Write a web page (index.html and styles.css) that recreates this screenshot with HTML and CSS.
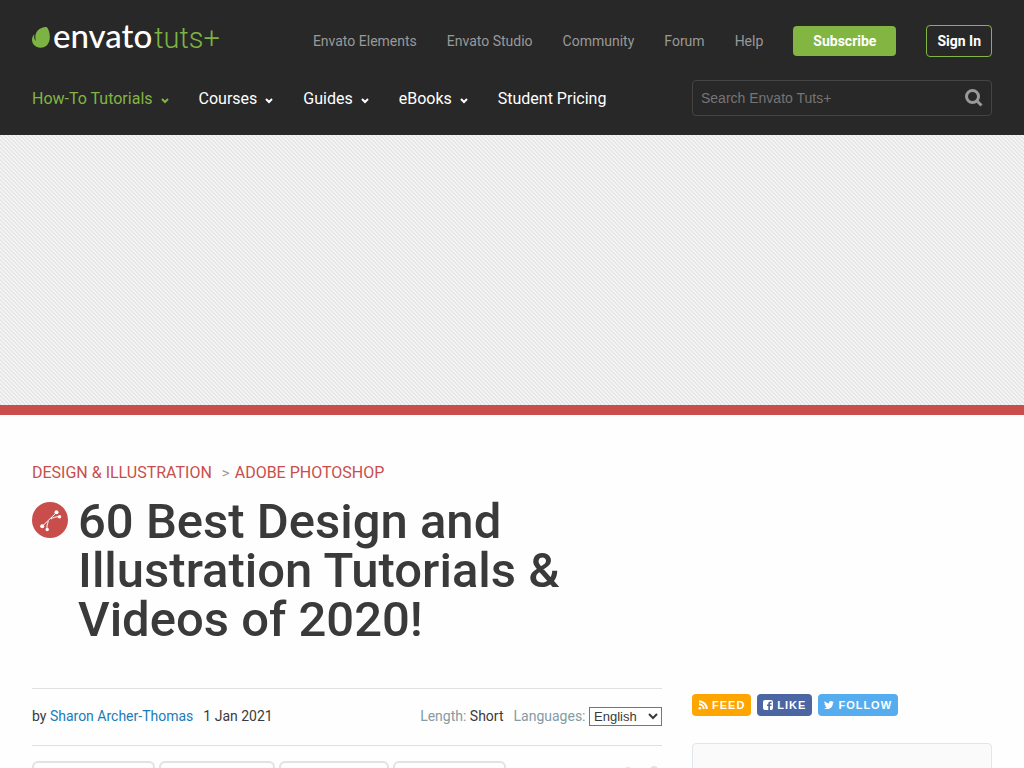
FILE: index.html
```html
<!DOCTYPE html>
<html lang="en">
<head>
<meta charset="utf-8">
<meta name="viewport" content="width=device-width, initial-scale=1">
<title>60 Best Design and Illustration Tutorials &amp; Videos of 2020!</title>
<link rel="stylesheet" href="styles.css">
</head>
<body>
<header class="header">
  <div class="header-top">
    <a class="logo" href="#" aria-label="Envato Tuts+">
      <svg class="logo-leaf" viewBox="0 0 18 21" aria-hidden="true"><path d="M14.8.3C13.600-.5 8.500.5 5.500 3.800 3 6.600 3.100 10.400 3.700 13.200c.1.500-.3.500-.5.200C2.200 12 2 9.800 2.300 8c0-.4-.3-.5-.5-.2C.6 9.300 0 11 0 12.800 0 17.200 3.500 20.700 8.400 20.700c4.800 0 8.300-3 9.200-8C18.600 7 16.300 1.300 14.800.3z"/></svg>
      <span class="logo-envato">envato</span><span class="logo-tuts">tuts+</span>
    </a>
    <nav class="meta-nav" aria-label="Envato">
      <a href="#">Envato Elements</a>
      <a href="#">Envato Studio</a>
      <a href="#">Community</a>
      <a href="#">Forum</a>
      <a href="#">Help</a>
      <a class="subscribe" href="#">Subscribe</a>
      <a class="sign-in" href="#">Sign In</a>
    </nav>
  </div>
  <div class="header-main">
    <nav class="main-nav" aria-label="Main">
      <a class="active" href="#">How-To Tutorials<svg class="caret" viewBox="0 0 8 6" aria-hidden="true"><path d="M1 1l3 3 3-3"/></svg></a>
      <a href="#">Courses<svg class="caret" viewBox="0 0 8 6" aria-hidden="true"><path d="M1 1l3 3 3-3"/></svg></a>
      <a href="#">Guides<svg class="caret" viewBox="0 0 8 6" aria-hidden="true"><path d="M1 1l3 3 3-3"/></svg></a>
      <a href="#">eBooks<svg class="caret" viewBox="0 0 8 6" aria-hidden="true"><path d="M1 1l3 3 3-3"/></svg></a>
      <a href="#">Student Pricing</a>
    </nav>
    <form class="search">
      <input type="search" aria-label="Search Envato Tuts+" placeholder="Search Envato Tuts+">
      <button type="submit" aria-label="Search"><svg viewBox="0 0 18 18" aria-hidden="true"><circle cx="7.500" cy="7.500" r="6"/><path d="M12 12l4.500 4.500"/></svg></button>
    </form>
  </div>
</header>
<div class="banner"></div>
<main class="page">
  <div class="content">
    <nav class="breadcrumb" aria-label="Breadcrumb"><a href="#">Design &amp; Illustration</a><span>&gt;</span><a href="#">Adobe Photoshop</a></nav>
    <div class="title">
      <svg class="topic" viewBox="0 0 36 36" aria-hidden="true"><circle class="disc" cx="18" cy="18" r="18"/><path class="curve" d="M10.500 24L24.500 10.500"/><path class="arm" d="M15.200 27.500c-.6-3 0-6 1.300-8M19 17c2-1.600 5-2.300 8.500-2.300"/><g class="nodes"><circle cx="10.200" cy="24.300" r="2"/><circle cx="24.500" cy="10.300" r="2"/><circle cx="15.200" cy="27.500" r="1.700"/><circle cx="27.500" cy="14.700" r="1.700"/></g></svg>
      <h1>60 Best Design and Illustration Tutorials &amp; Videos of 2020!</h1>
    </div>
  </div>
  <div class="columns">
    <div class="post">
      <div class="byline">
        <span>by <a href="#">Sharon Archer-Thomas</a></span>
        <time datetime="2021-01-01">1 Jan 2021</time>
        <span class="length"><span class="label">Length:</span> Short</span>
        <span class="languages"><label class="label" for="lang">Languages:</label> <select id="lang"><option>English</option></select></span>
      </div>
      <div class="tags">
        <div class="tag tag-a"></div><div class="tag tag-b"></div><div class="tag tag-c"></div><div class="tag tag-d"></div>
        <svg class="share" viewBox="0 0 40 24" aria-hidden="true"><circle cx="6" cy="8" r="6"/><circle cx="32" cy="5" r="4"/></svg>
      </div>
    </div>
    <aside class="sidebar">
      <div class="social">
        <a class="feed" href="#"><svg viewBox="0 0 10 10" aria-hidden="true"><circle class="fill" cx="1.800" cy="8.200" r="1.300"/><path class="line" d="M1 4.300A4.700 4.700 0 0 1 5.700 9M1 1.200A7.800 7.800 0 0 1 8.800 9"/></svg>Feed</a>
        <a class="like" href="#"><svg viewBox="0 0 10 10" aria-hidden="true"><path class="fill" d="M2 0h6a2 2 0 0 1 2 2v6a2 2 0 0 1-2 2H7V6h1.500V4.500H7v-.7c0-.5.2-.8.800-.8h.8V1.500H7.300C6 1.500 5.300 2.300 5.300 3.600v.9H4V6h1.300v4H2a2 2 0 0 1-2-2V2a2 2 0 0 1 2-2z"/></svg>Like</a>
        <a class="follow" href="#"><svg viewBox="0 0 24 24" aria-hidden="true"><path class="fill" d="M24 4.600a10 10 0 0 1-2.800.8 5 5 0 0 0 2.100-2.700 10 10 0 0 1-3.100 1.200 4.900 4.900 0 0 0-8.400 4.500A14 14 0 0 1 1.700 3.100a4.900 4.900 0 0 0 1.500 6.600 5 5 0 0 1-2.200-.6 4.900 4.900 0 0 0 3.900 4.900 5 5 0 0 1-2.200.1 4.900 4.900 0 0 0 4.600 3.400A10 10 0 0 1 0 19.500a14 14 0 0 0 7.500 2.200c9.100 0 14-7.500 14-14v-.6A10 10 0 0 0 24 4.600z"/></svg>Follow</a>
      </div>
      <div class="card"></div>
    </aside>
  </div>
</main>
</body>
</html>
```
FILE: styles.css
```css
* { box-sizing: border-box; }
body {
  margin: 0;
  background: #fefefe;
  color: #3a3a3a;
  font: 14px/20px Roboto, "Liberation Sans", sans-serif;
}
a { color: inherit; text-decoration: none; }
svg { display: block; flex: none; }

.header { background: #282828; padding: 16px 32px 19px; }
.header-top, .header-main { display: flex; justify-content: space-between; align-items: center; }
.header-top { height: 48px; }
.header-main { margin-top: 16px; height: 36px; }

.logo { display: flex; align-items: baseline; height: 40px; line-height: 40px; margin-bottom: 10px; }
.logo-leaf { width: 18px; height: 21px; fill: #7cb342; margin-right: 3px; }
.logo-envato { color: #fff; font-family: Lato, sans-serif; font-size: 33px; font-weight: 500; }
.logo-tuts { color: #7cb342; font-family: Roboto, sans-serif; font-size: 29px; font-weight: 300; margin-left: 2px; }

.meta-nav { display: flex; align-items: center; gap: 30px; padding-top: 1px; color: #999; }
.subscribe, .sign-in { color: #fff; font-weight: 700; border-radius: 4px; }
.subscribe { background: #82b541; padding: 5px 20px; }
.sign-in { border: 1px solid #82b541; padding: 5px 10px; }

.main-nav { display: flex; gap: 30px; padding-top: 2px; color: #fff; font-size: 16px; }
.main-nav a { display: flex; align-items: center; }
.main-nav .active { color: #82b541; }
.caret { width: 8px; height: 6px; margin: 3px 0 0 8px; fill: none; stroke: currentColor; stroke-width: 2; }

.search { display: flex; align-items: center; width: 300px; height: 36px; border: 1px solid #444; border-radius: 4px; padding: 0 8px; }
.search input { flex: 1; min-width: 0; padding: 0; border: 0; outline: 0; background: none; color: #fff; font: 14px/20px "Liberation Sans", sans-serif; }
.search input::placeholder { color: #757575; }
.search button { border: 0; padding: 0; background: none; }
.search svg { width: 18px; height: 18px; fill: none; stroke: #999; stroke-width: 3; }

.banner {
  height: 280px;
  border-bottom: 10px solid #c94e4b;
  background: linear-gradient(45deg, #f5f5f5 25%, #e6e6e6 25% 50%, #f5f5f5 50% 75%, #e6e6e6 75%) 0 0 / 4px 4px;
}

.page { padding: 48px 32px 0; }
.content { max-width: 630px; }
.breadcrumb { color: #c94e4b; font-size: 16px; text-transform: uppercase; }
.breadcrumb span { color: #999; font-size: 15px; margin: 0 5px 0 10px; }
.title { display: flex; gap: 10px; margin-top: 14px; }
.topic { width: 36px; height: 36px; margin-top: 5px; }
.topic .disc { fill: #c94e4b; }
.topic .curve, .topic .arm { fill: none; stroke: #fff; stroke-width: 1; }
.topic .nodes { fill: #fff; }
h1 { margin: 0; max-width: 500px; font-size: 49px; line-height: 49px; font-weight: 500; }

.columns { display: flex; gap: 30px; margin-top: 44px; }
.post { flex: 1; min-width: 0; }
.byline { display: flex; align-items: center; gap: 10px; height: 58px; padding-bottom: 2px; border: solid #e0e0e0; border-width: 1px 0; }
.byline a { color: #1a7cb8; }
.length { margin-left: auto; }
.label { color: #849ba5; }
.byline select { height: 19px; width: 73px; padding: 0; border: 1px solid #767676; border-radius: 0; background: #fff; color: #3a3a3a; font: 13px/16px "Liberation Sans", sans-serif; vertical-align: baseline; }
.tags { display: flex; gap: 4px; margin-top: 15px; height: 40px; }
.tag { border: 2px solid #e2e2e2; border-radius: 6px; }
.tag-a { width: 123px; }
.tag-b { width: 116px; }
.tag-c { width: 110px; }
.tag-d { width: 113px; }
.share { width: 40px; height: 24px; margin: 4px 0 0 auto; fill: #e2e2e2; }

.sidebar { flex: none; width: 300px; padding-top: 6px; }
.social { display: flex; gap: 6px; }
.social a { display: flex; align-items: center; gap: 4px; height: 22px; padding: 0 6px; border-radius: 4px; color: #fff; font: 700 11px/22px "Liberation Sans", sans-serif; letter-spacing: 1px; text-transform: uppercase; }
.social svg { width: 10px; height: 10px; }
.social .fill { fill: #fff; }
.social .line { fill: none; stroke: #fff; stroke-width: 2; }
.feed { background: #ffa500; }
.like { background: #4c66a4; }
.follow { background: #55acee; }
.card { height: 240px; margin-top: 27px; border: 1px solid #dfe6ec; border-radius: 4px; background: #fafafa; }
```
